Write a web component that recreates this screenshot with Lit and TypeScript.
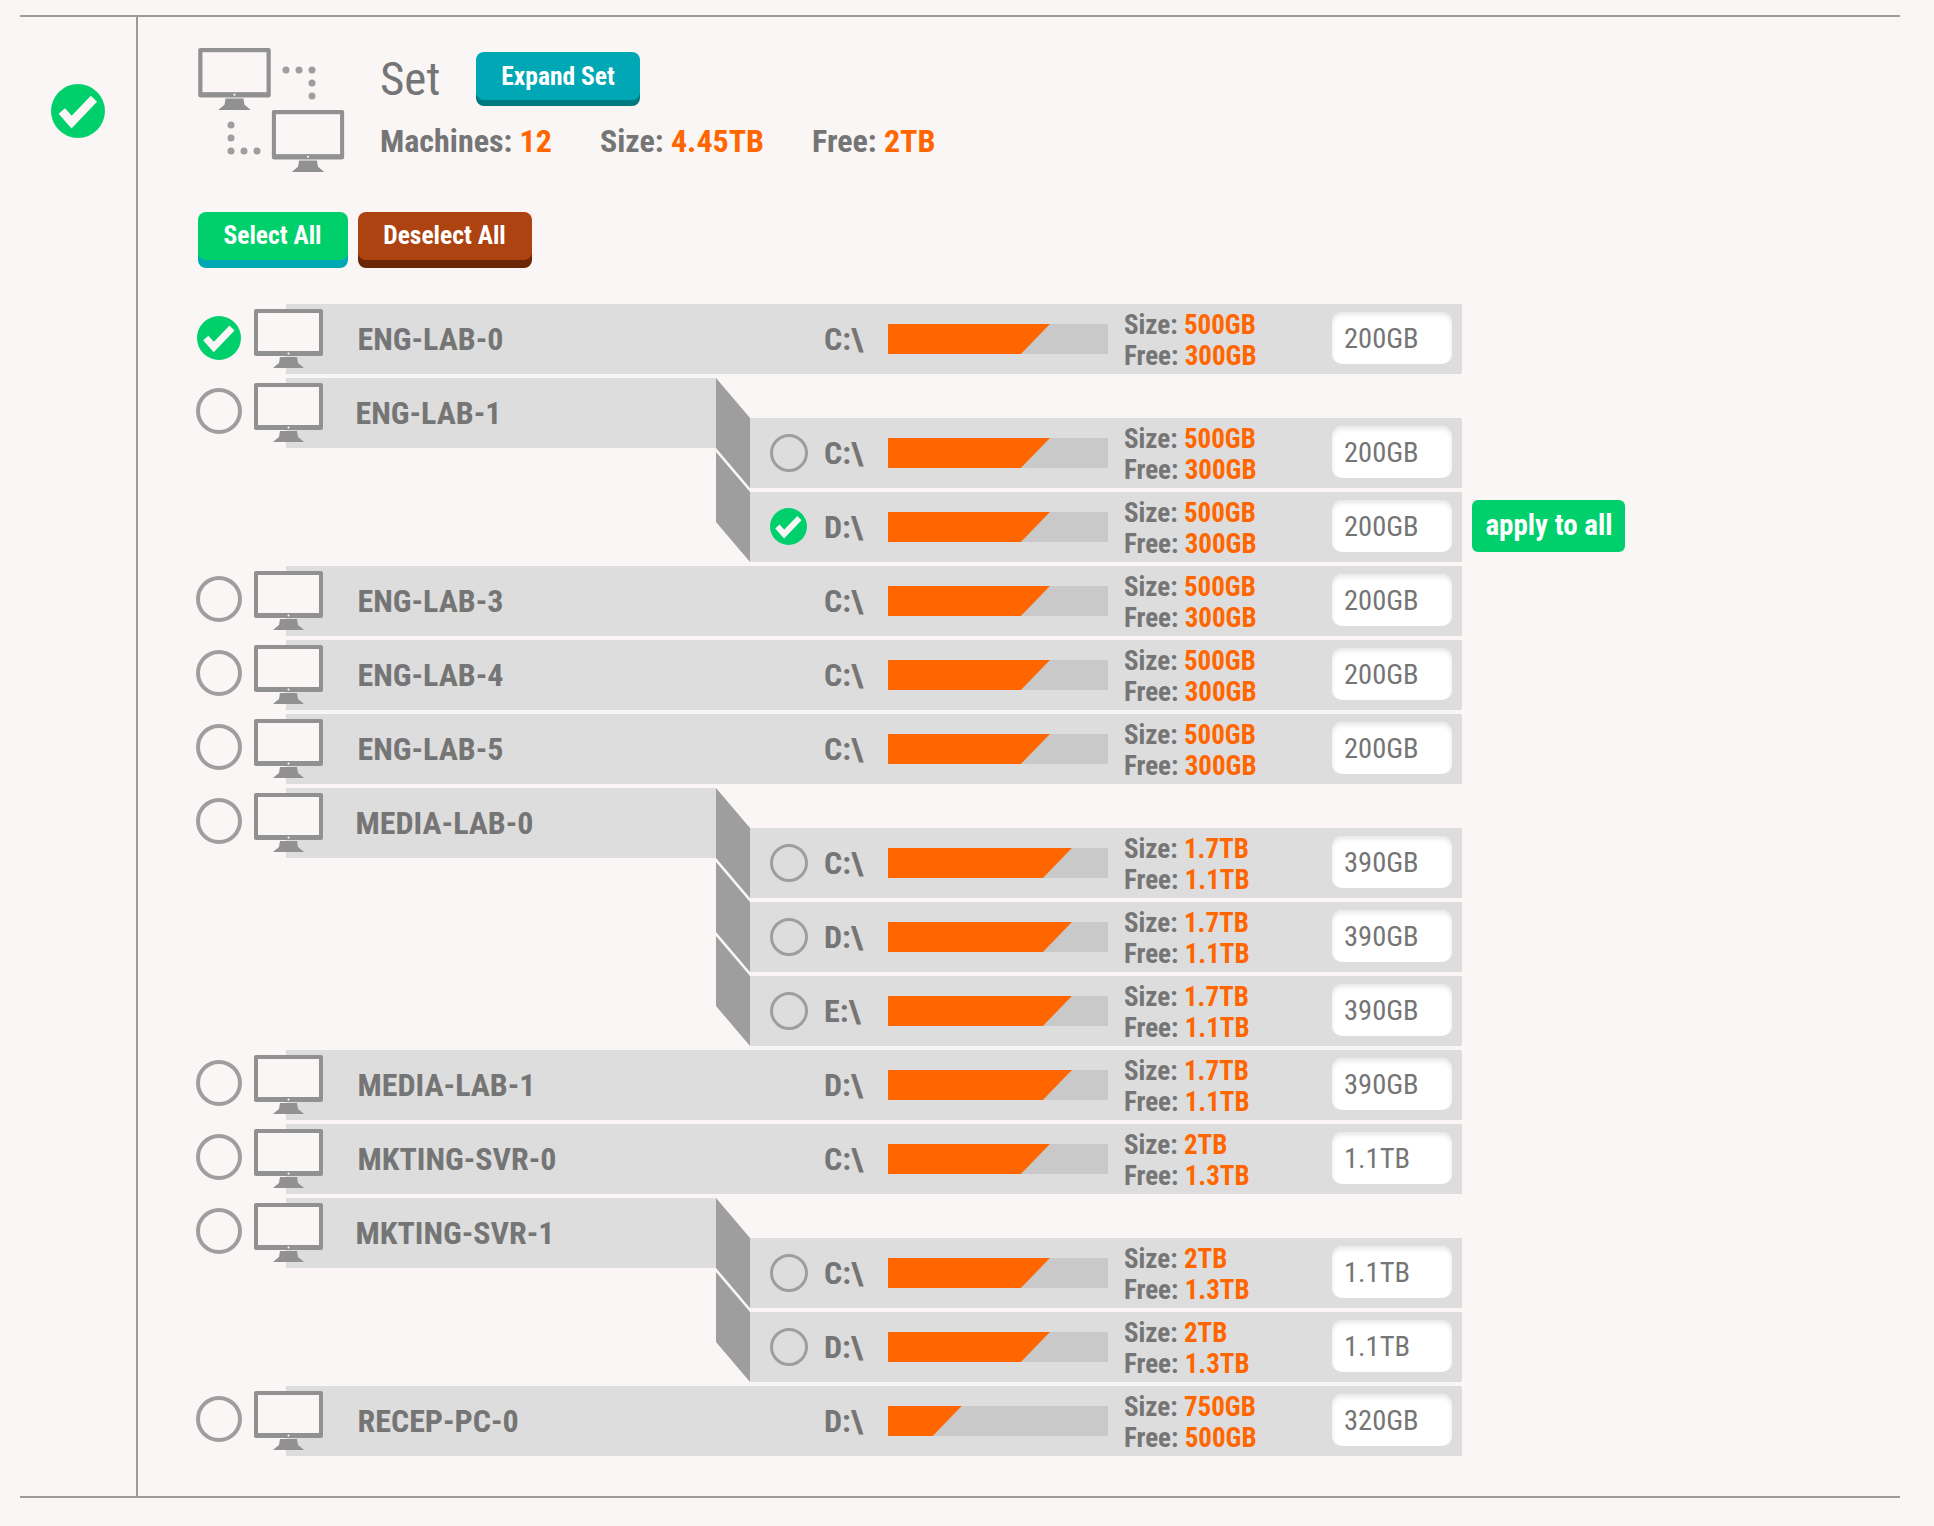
import { LitElement, html, css, svg } from 'lit';
import { customElement } from 'lit/decorators.js';

interface Disk { label: string; size: string; free: string; pct: number; cap: string; on?: boolean; apply?: boolean }
interface Machine { name: string; on?: boolean; disks: Disk[] }

const d500 = (label: string, on = false, apply = false): Disk =>
    ({ label, size: '500GB', free: '300GB', pct: 73.6, cap: '200GB', on, apply });
const d17 = (label: string): Disk => ({ label, size: '1.7TB', free: '1.1TB', pct: 83.6, cap: '390GB' });
const d2 = (label: string): Disk => ({ label, size: '2TB', free: '1.3TB', pct: 73.6, cap: '1.1TB' });

const MACHINES: Machine[] = [
    { name: 'ENG-LAB-0', on: true, disks: [d500('C:\\')] },
    { name: 'ENG-LAB-1', disks: [d500('C:\\'), d500('D:\\', true, true)] },
    { name: 'ENG-LAB-3', disks: [d500('C:\\')] },
    { name: 'ENG-LAB-4', disks: [d500('C:\\')] },
    { name: 'ENG-LAB-5', disks: [d500('C:\\')] },
    { name: 'MEDIA-LAB-0', disks: [d17('C:\\'), d17('D:\\'), d17('E:\\')] },
    { name: 'MEDIA-LAB-1', disks: [d17('D:\\')] },
    { name: 'MKTING-SVR-0', disks: [d2('C:\\')] },
    { name: 'MKTING-SVR-1', disks: [d2('C:\\'), d2('D:\\')] },
    { name: 'RECEP-PC-0', disks: [{ label: 'D:\\', size: '750GB', free: '500GB', pct: 33.500, cap: '320GB' }] },
];

const monitorShape = svg`
    <rect width="69" height="47" rx="2" fill="#919191" />
    <rect x="4" y="4" width="61" height="38" fill="#f9f6f5" />
    <circle cx="34.5" cy="44.5" r="1" fill="#fff" />
    <path d="M26 48h17l1 6 5.500 4.500v1h-30v-1l5.500-4.500z" fill="#919191" />
`;

const checkIcon = (size: number) => html`
    <svg class="check" width=${size} height=${size} viewBox="0 0 44 44">
        <circle cx="22" cy="22" r="22" fill="#00d06c" />
        <polyline points="8.800,22 16.800,31 35,12" fill="none" stroke="#f9f6f5" stroke-width="7" />
    </svg>
`;

@customElement('app-root')
export class AppRoot extends LitElement {
    static styles = css`
        :host {
            display: block;
            height: 1526px;
            background: #f9f6f5;
            color: #757575;
            font-family: "Roboto Condensed", Roboto, "Liberation Sans", sans-serif;
            font-stretch: 75%;
            font-weight: 700;
            overflow: hidden;
        }

        .frame {
            display: flex;
            margin: 15px 34px 0 20px;
            height: 1483px;
            box-sizing: border-box;
            border-top: 2px solid #9e9b97;
            border-bottom: 2px solid #9e9b97;
        }

        .status {
            width: 118px;
            flex: none;
            box-sizing: border-box;
            padding: 67px 0 0 31px;
            border-right: 2px solid #9e9b97;
        }

        .content {
            flex: 1;
            padding: 31px 0 0 60px;
        }

        .header {
            display: flex;
            gap: 35px;
        }

        .title-row {
            display: flex;
            align-items: center;
            gap: 34px;
            margin-top: 4px;
            height: 48px;
        }

        .title {
            width: 62px;
            padding-top: 6px;
            font-size: 47px;
            font-weight: 400;
            line-height: 48px;
        }

        button {
            border: 0;
            padding: 0;
            color: #fff;
            font-family: inherit;
            font-stretch: inherit;
            font-weight: 700;
            font-size: 25.500px;
            border-radius: 8px;
            height: 48px;
        }

        .expand {
            width: 164px;
            background: #00a8b5;
            box-shadow: 0 6px 0 #007a80;
        }

        .stats {
            display: flex;
            gap: 48px;
            margin-top: 23px;
            font-size: 32px;
            line-height: 36px;
        }

        .val {
            color: #ff6600;
        }

        .actions {
            display: flex;
            gap: 10px;
            margin-top: 39px;
        }

        .select {
            width: 150px;
            padding: 0 1px 2px 0;
            background: #00d06c;
            box-shadow: 0 8px 0 #00a8b5;
        }

        .deselect {
            width: 174px;
            padding: 0 1px 2px 0;
            background: #ad4310;
            box-shadow: 0 8px 0 #6a2606;
        }

        .list {
            display: flex;
            flex-direction: column;
            gap: 4px;
            margin-top: 44px;
            width: 1264px;
        }

        .row {
            display: flex;
            align-items: center;
            height: 70px;
            background: linear-gradient(to right, transparent 88px, #ddd 88px);
        }

        .lead {
            display: flex;
            align-items: flex-start;
            width: 159.500px;
            height: 70px;
            flex: none;
        }

        .radio {
            box-sizing: border-box;
            display: block;
            flex: none;
            border-radius: 50%;
            border: 4px solid #9e9e9e;
        }

        .lead .radio {
            width: 46px;
            height: 46px;
            margin: 10px 0 0 -2px;
        }

        .lead .check {
            flex: none;
            margin-top: 12px;
            margin-right: 1px;
            margin-left: -1px;
        }

        .lead .monitor {
            flex: none;
            margin: 5px 0 0 12px;
        }

        .name {
            flex: 1;
            font-size: 32px;
        }

        .group {
            display: flex;
        }

        .group-head {
            flex: none;
            width: 518px;
        }

        .group-head .name {
            margin-left: -2px;
        }

        .subs {
            display: flex;
            flex-direction: column;
            gap: 4px;
            margin: 40px 0 0 34px;
        }

        .sub-line {
            display: flex;
            align-items: center;
            gap: 10px;
        }

        .sub {
            position: relative;
            display: flex;
            align-items: center;
            flex: none;
            width: 712px;
            height: 70px;
            box-sizing: border-box;
            padding-left: 20px;
            background: #ddd;
        }

        /* slanted connector from the machine row down to the disk row */
        .sub::before {
            content: '';
            position: absolute;
            left: -34px;
            top: -40px;
            width: 34px;
            height: 110px;
            background: #9e9e9e;
            clip-path: polygon(0 0, 100% 36.360%, 100% 100%, 0 63.640%);
        }

        .sub .slot {
            width: 38px;
            height: 38px;
            flex: none;
            margin-right: 17px;
        }

        .sub .radio {
            width: 38px;
            height: 38px;
            border-width: 3px;
        }

        .disk {
            display: flex;
            align-items: center;
            flex: none;
            width: 637px;
        }

        .label {
            width: 64px;
            margin-left: -1px;
            flex: none;
            font-size: 32px;
        }

        .bar {
            width: 220px;
            height: 30px;
            flex: none;
            background: #c9c9c9;
        }

        .fill {
            height: 100%;
            background: #ff6600;
            clip-path: polygon(0 0, 100% 0, calc(100% - 29px) 100%, 0 100%);
        }

        .info {
            width: 224px;
            flex: none;
            box-sizing: border-box;
            padding: 3px 0 0 16px;
            font-size: 27px;
            line-height: 31px;
        }

        .cap {
            width: 120px;
            height: 52px;
            flex: none;
            box-sizing: border-box;
            padding-left: 12px;
            margin-top: -2px;
            border-radius: 10px;
            background: #fff;
            box-shadow: inset 0 3px 4px #e8e8e8;
            font-size: 28.500px;
            font-weight: 400;
            line-height: 54px;
        }

        .apply {
            width: 153px;
            height: 52px;
            flex: none;
            margin-top: -2px;
            padding: 0 0 2px 1px;
            border-radius: 6px;
            background: #00d06c;
            font-size: 29px;
        }
    `;

    private renderDisk(d: Disk) {
        return html`
            <div class="disk">
                <div class="label">${d.label}</div>
                <div class="bar"><div class="fill" style="width:${d.pct}%"></div></div>
                <div class="info">
                    <div>Size: <span class="val">${d.size}</span></div>
                    <div>Free: <span class="val">${d.free}</span></div>
                </div>
                <div class="cap">${d.cap}</div>
            </div>
        `;
    }

    private renderLead(m: Machine) {
        return html`
            <div class="lead">
                ${m.on ? checkIcon(44) : html`<span class="radio"></span>`}
                <svg class="monitor" width="69" height="59" viewBox="0 0 69 59">${monitorShape}</svg>
            </div>
        `;
    }

    private renderMachine(m: Machine) {
        if (m.disks.length === 1) {
            return html`
                <div class="row">
                    ${this.renderLead(m)}
                    <div class="name">${m.name}</div>
                    ${this.renderDisk(m.disks[0])}
                </div>
            `;
        }
        return html`
            <div class="group">
                <div class="row group-head">
                    ${this.renderLead(m)}
                    <div class="name">${m.name}</div>
                </div>
                <div class="subs">
                    ${m.disks.map(d => html`
                        <div class="sub-line">
                            <div class="sub">
                                <div class="slot">${d.on ? checkIcon(37) : html`<span class="radio"></span>`}</div>
                                ${this.renderDisk(d)}
                            </div>
                            ${d.apply ? html`<button class="apply">apply to all</button>` : ''}
                        </div>
                    `)}
                </div>
            </div>
        `;
    }

    render() {
        return html`
            <div class="frame">
                <div class="status">${checkIcon(54)}</div>
                <div class="content">
                    <div class="header">
                        <svg width="147" height="125" viewBox="0 0 147 125">
                            <svg width="73" height="62" viewBox="0 0 69 59">${monitorShape}</svg>
                            <svg x="73.500" y="62" width="73" height="62" viewBox="0 0 69 59">${monitorShape}</svg>
                            <g fill="#9e9e9e">
                                <circle cx="88" cy="22" r="3.500" />
                                <circle cx="101" cy="22" r="3.500" />
                                <circle cx="114" cy="22" r="3.500" />
                                <circle cx="114" cy="35" r="3.500" />
                                <circle cx="114" cy="48" r="3.500" />
                                <circle cx="33" cy="77" r="3.500" />
                                <circle cx="33" cy="90" r="3.500" />
                                <circle cx="33" cy="103" r="3.500" />
                                <circle cx="46" cy="103" r="3.500" />
                                <circle cx="59" cy="103" r="3.500" />
                            </g>
                        </svg>
                        <div>
                            <div class="title-row">
                                <div class="title">Set</div>
                                <button class="expand">Expand Set</button>
                            </div>
                            <div class="stats">
                                <div>Machines: <span class="val">12</span></div>
                                <div>Size: <span class="val">4.45TB</span></div>
                                <div>Free: <span class="val">2TB</span></div>
                            </div>
                        </div>
                    </div>
                    <div class="actions">
                        <button class="select">Select All</button>
                        <button class="deselect">Deselect All</button>
                    </div>
                    <div class="list">
                        ${MACHINES.map(m => this.renderMachine(m))}
                    </div>
                </div>
            </div>
        `;
    }
}
